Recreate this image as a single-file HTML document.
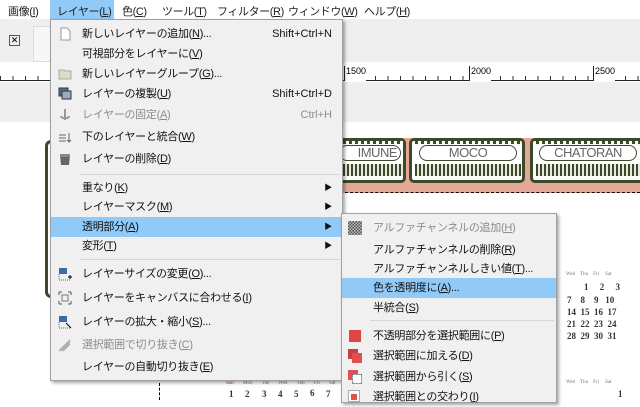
<!DOCTYPE html>
<html><head><meta charset="utf-8">
<style>
*{margin:0;padding:0;box-sizing:border-box}
body{width:640px;height:400px;overflow:hidden;position:relative;background:#fff;font-family:"Liberation Sans","Noto Sans CJK JP",sans-serif;font-size:11px;color:#000}
.abs{position:absolute}
.mb{top:0;left:0;width:640px;height:19px;background:#fff}
.mb span{position:absolute;top:3px;font-size:11px;color:#222;letter-spacing:-0.4px;white-space:nowrap}
u{text-decoration:underline}
.menu{background:#f0f0f0;border:1px solid #a0a0a0;box-shadow:2px 2px 3px rgba(0,0,0,.35)}
.it{position:absolute;left:0;right:0;height:20px;line-height:20px;font-size:11px;color:#111;white-space:nowrap;letter-spacing:-0.3px}
.it .t{position:absolute;left:31px}
.it .k{position:absolute;right:10px;letter-spacing:0}
.it .a{position:absolute;right:10px;font-size:8px}
.dis{color:#8c8c8c}
.hl{background:#91c9f7}
.sep{position:absolute;left:28px;right:2px;height:1px;background:#d7d7d7}
.ic{position:absolute;left:7px;top:3px;width:14px;height:14px}
.cal{position:absolute;font-family:"Liberation Serif",serif;font-size:9px;font-weight:bold;color:#333}
.ch{position:absolute;font-family:"Liberation Serif",serif;font-size:5px;color:#777}
.lab{position:absolute;top:145px;height:16px;border:1px solid #3d4a2a;border-radius:8px;font-size:13px;color:#666;line-height:14px;background:#fff;letter-spacing:-0.5px;font-weight:normal}
</style></head><body>
<div class="abs mb">
<span style="left:8px">画像(<u>I</u>)</span>
<div class="abs" style="left:50px;top:0;width:64px;height:19px;background:#91c9f7"></div>
<span style="left:57px">レイヤー(<u>L</u>)</span>
<span style="left:122px">色(<u>C</u>)</span>
<span style="left:162px">ツール(<u>T</u>)</span>
<span style="left:217px">フィルター(<u>R</u>)</span>
<span style="left:288px">ウィンドウ(<u>W</u>)</span>
<span style="left:364px">ヘルプ(<u>H</u>)</span>
</div>
<div class="abs" style="top:19px;left:0;width:640px;height:43px;background:#efefef"></div>
<div class="abs" style="top:35px;left:9px;width:11px;height:11px;border:1px solid #555;font-size:9px;line-height:9px;text-align:center">✕</div>
<div class="abs" style="top:26px;left:33px;width:20px;height:36px;background:#f7f7f7;border:1px solid #ddd"></div>
<div class="abs" style="top:62px;left:0;width:640px;height:19px;background:#fff;border-bottom:1px solid #222;
background-image:repeating-linear-gradient(90deg,#333 0 1px,transparent 1px 12.5px);background-size:100% 4px;background-repeat:no-repeat;background-position:0 14px"></div>
<div class="abs" style="top:66px;left:344px;font-size:9px;border-left:1px solid #222;padding-left:1px;height:15px;background:#fff">1500</div>
<div class="abs" style="top:66px;left:469px;font-size:9px;border-left:1px solid #222;padding-left:1px;height:15px;background:#fff">2000</div>
<div class="abs" style="top:66px;left:593px;font-size:9px;border-left:1px solid #222;padding-left:1px;height:15px;background:#fff">2500</div>
<div class="abs" style="top:82px;left:0;width:640px;height:40px;background:#efefef"></div>
<div class="abs" style="top:140px;left:45px;width:12px;height:158px;border:3px solid #3d4a2a;border-right:none;border-radius:6px 0 0 6px"></div>
<!-- frames -->
<div class="abs" style="top:138px;left:340px;width:300px;height:55px;background:#e3a896"></div>
<div class="abs" style="top:138px;left:336px;width:70px;height:45px;border:3px solid #3d4a2a;border-radius:5px;background:#fff"></div>
<div class="abs" style="top:138px;left:409px;width:116px;height:45px;border:3px solid #3d4a2a;border-radius:5px;background:#fff"></div>
<div class="abs" style="top:138px;left:530px;width:115px;height:45px;border:3px solid #3d4a2a;border-radius:5px;background:#fff"></div>
<div class="abs" style="top:141px;left:343px;width:60px;height:3px;background:repeating-linear-gradient(90deg,#3d4a2a 0 3px,#fff 3px 6px)"></div>
<div class="abs" style="top:141px;left:415px;width:106px;height:3px;background:repeating-linear-gradient(90deg,#3d4a2a 0 3px,#fff 3px 6px)"></div>
<div class="abs" style="top:141px;left:536px;width:104px;height:3px;background:repeating-linear-gradient(90deg,#3d4a2a 0 3px,#fff 3px 6px)"></div>
<div class="abs" style="top:164px;left:343px;width:60px;height:12px;background:repeating-linear-gradient(90deg,#3d4a2a 0 2px,#e8e8e0 2px 4px)"></div>
<div class="abs" style="top:164px;left:415px;width:106px;height:12px;background:repeating-linear-gradient(90deg,#3d4a2a 0 2px,#e8e8e0 2px 4px)"></div>
<div class="abs" style="top:164px;left:536px;width:104px;height:12px;background:repeating-linear-gradient(90deg,#3d4a2a 0 2px,#e8e8e0 2px 4px)"></div>
<div class="lab" style="left:339px;width:62px;text-align:right;padding-right:3px">IMUNE</div>
<div class="lab" style="left:419px;width:98px;text-align:center">MOCO</div>
<div class="lab" style="left:539px;width:98px;text-align:center">CHATORAN</div>
<div class="abs" style="top:192px;left:340px;width:300px;height:0;border-top:1px dashed #000"></div>
<!-- calendar -->
<div class="ch" style="left:566px;top:272px">Wed&nbsp;&nbsp;&nbsp;&nbsp;Thu&nbsp;&nbsp;&nbsp;&nbsp;Fri&nbsp;&nbsp;&nbsp;&nbsp;&nbsp;Sat</div>
<div class="cal" style="left:584px;top:282px">1&nbsp;&nbsp;&nbsp;&nbsp;&nbsp;2&nbsp;&nbsp;&nbsp;&nbsp;&nbsp;3</div>
<div class="cal" style="left:567px;top:294px;line-height:12px">7&nbsp;&nbsp;&nbsp;&nbsp;8&nbsp;&nbsp;&nbsp;&nbsp;9&nbsp;&nbsp;&nbsp;10<br>14&nbsp;&nbsp;15&nbsp;&nbsp;16&nbsp;&nbsp;17<br>21&nbsp;&nbsp;22&nbsp;&nbsp;23&nbsp;&nbsp;24<br>28&nbsp;&nbsp;29&nbsp;&nbsp;30&nbsp;&nbsp;31</div>
<div class="ch" style="left:566px;top:380px">Wed&nbsp;&nbsp;&nbsp;&nbsp;Thu&nbsp;&nbsp;&nbsp;&nbsp;Fri&nbsp;&nbsp;&nbsp;&nbsp;&nbsp;Sat</div>
<div class="cal" style="left:618px;top:389px">1</div>
<div class="ch" style="left:226px;top:381px;word-spacing:8px"><span style="color:#c33">Sun</span> Mon Tue Wed Thu Fri Sat</div>
<div class="cal" style="left:229px;top:389px">1</div>
<div class="cal" style="left:245px;top:389px">2</div>
<div class="cal" style="left:262px;top:389px">3</div>
<div class="cal" style="left:278px;top:389px">4</div>
<div class="cal" style="left:294px;top:389px">5</div>
<div class="cal" style="left:310px;top:388px">6</div>
<div class="cal" style="left:326px;top:389px">7</div>
<div class="abs" style="left:159px;top:383px;width:1px;height:17px;border-left:1px dashed #000"></div>

<!-- main menu -->
<div class="abs menu" style="left:50px;top:19px;width:293px;height:362px">
<div class="it" style="top:4px"><svg class="ic" viewBox="0 0 14 14"><path d="M3 1h6l3 3v9H3z" fill="#fff" stroke="#999"/></svg><span class="t">新しいレイヤーの追加(<u>N</u>)...</span><span class="k">Shift+Ctrl+N</span></div>
<div class="it" style="top:24px"><span class="t">可視部分をレイヤーに(<u>V</u>)</span></div>
<div class="it" style="top:44px"><svg class="ic" viewBox="0 0 14 14"><path d="M1 3h5l1 1h6v8H1z" fill="#dcdcc4" stroke="#aaa"/></svg><span class="t">新しいレイヤーグループ(<u>G</u>)...</span></div>
<div class="it" style="top:64px"><svg class="ic" viewBox="0 0 14 14"><rect x="1" y="1" width="9" height="8" fill="#5a6f8c" stroke="#333"/><rect x="4" y="4" width="9" height="8" fill="#9aaac0" stroke="#333"/></svg><span class="t">レイヤーの複製(<u>U</u>)</span><span class="k">Shift+Ctrl+D</span></div>
<div class="it dis" style="top:85px"><svg class="ic" viewBox="0 0 14 14"><path d="M7 1v11M3 8c0 3 8 3 8 0" stroke="#999" stroke-width="2" fill="none"/></svg><span class="t">レイヤーの固定(<u>A</u>)</span><span class="k">Ctrl+H</span></div>
<div class="it" style="top:107px"><svg class="ic" viewBox="0 0 14 14"><path d="M1 5h7M1 8h7M1 11h7M11 3v9M9 10l2 2 2-2" stroke="#666" fill="none"/></svg><span class="t">下のレイヤーと統合(<u>W</u>)</span></div>
<div class="it" style="top:129px"><svg class="ic" viewBox="0 0 14 14"><path d="M2 3h10l-1 10H3z" fill="#666"/><rect x="2" y="2" width="10" height="3" fill="#888"/></svg><span class="t">レイヤーの削除(<u>D</u>)</span></div>
<div class="sep" style="top:154px"></div>
<div class="it" style="top:158px"><span class="t">重なり(<u>K</u>)</span><span class="a">▶</span></div>
<div class="it" style="top:177px"><span class="t">レイヤーマスク(<u>M</u>)</span><span class="a">▶</span></div>
<div class="it hl" style="top:197px"><span class="t">透明部分(<u>A</u>)</span><span class="a">▶</span></div>
<div class="it" style="top:216px"><span class="t">変形(<u>T</u>)</span><span class="a">▶</span></div>
<div class="sep" style="top:239px"></div>
<div class="it" style="top:244px"><svg class="ic" viewBox="0 0 14 14"><rect x="1" y="1" width="8" height="6" fill="#3d6aa0"/><path d="M1 7v6h12" stroke="#666" stroke-dasharray="1 1" fill="none"/><path d="M10 10h4M12 8v4" stroke="#000"/></svg><span class="t">レイヤーサイズの変更(<u>O</u>)...</span></div>
<div class="it" style="top:268px"><svg class="ic" viewBox="0 0 14 14"><rect x="4" y="4" width="6" height="6" fill="none" stroke="#777"/><path d="M1 1h3M1 1v3M13 1h-3M13 1v3M1 13h3M1 13v-3M13 13h-3M13 13v-3" stroke="#555"/></svg><span class="t">レイヤーをキャンバスに合わせる(<u>I</u>)</span></div>
<div class="it" style="top:292px"><svg class="ic" viewBox="0 0 14 14"><rect x="1" y="1" width="8" height="6" fill="#3d6aa0"/><path d="M8 8l5 5" stroke="#000"/><path d="M1 7v6h12" stroke="#666" stroke-dasharray="1 1" fill="none"/></svg><span class="t">レイヤーの拡大・縮小(<u>S</u>)...</span></div>
<div class="it dis" style="top:315px"><svg class="ic" viewBox="0 0 14 14"><path d="M1 13L12 2M3 13l9-9M5 13l7-7" stroke="#999" fill="none"/></svg><span class="t">選択範囲で切り抜き(<u>C</u>)</span></div>
<div class="it" style="top:337px"><span class="t">レイヤーの自動切り抜き(<u>E</u>)</span></div>
</div>

<!-- submenu -->
<div class="abs menu" style="left:341px;top:213px;width:216px;height:190px">
<div class="it dis" style="top:4px"><div class="ic" style="left:6px;top:3px;background:repeating-conic-gradient(#555 0 25%,#bbb 0 50%) 0 0/3px 3px"></div><span class="t">アルファチャンネルの追加(<u>H</u>)</span></div>
<div class="it" style="top:26px"><span class="t">アルファチャンネルの削除(<u>R</u>)</span></div>
<div class="it" style="top:45px"><span class="t">アルファチャンネルしきい値(<u>T</u>)...</span></div>
<div class="it hl" style="top:64px"><span class="t">色を透明度に(<u>A</u>)...</span></div>
<div class="it" style="top:84px"><span class="t">半統合(<u>S</u>)</span></div>
<div class="sep" style="top:106px"></div>
<div class="it" style="top:112px"><div class="ic" style="left:7px;top:4px;width:12px;height:12px;background:#e04545"></div><span class="t">不透明部分を選択範囲に(<u>P</u>)</span></div>
<div class="it" style="top:132px"><div class="ic" style="left:6px;top:3px;width:10px;height:10px;background:#c84040"></div><div class="ic" style="left:10px;top:7px;width:10px;height:10px;background:#e05050"></div><span class="t">選択範囲に加える(<u>D</u>)</span></div>
<div class="it" style="top:153px"><div class="ic" style="left:6px;top:3px;width:10px;height:10px;background:#e05050"></div><div class="ic" style="left:10px;top:7px;width:10px;height:10px;background:#fff;border:1px dashed #888"></div><span class="t">選択範囲から引く(<u>S</u>)</span></div>
<div class="it" style="top:173px"><div class="ic" style="left:6px;top:3px;width:12px;height:12px;background:#fff;border:1px solid #aaa"></div><div class="ic" style="left:9px;top:7px;width:6px;height:6px;background:#e05050"></div><span class="t">選択範囲との交わり(<u>I</u>)</span></div>
</div>
</body></html>
